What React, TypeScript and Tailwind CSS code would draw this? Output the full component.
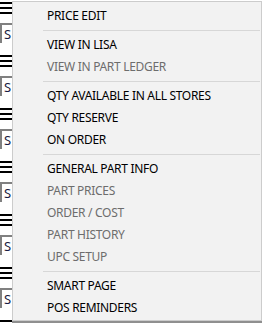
type Entry = { label: string; disabled?: boolean } | "sep";

const entries: Entry[] = [
  { label: "PRICE EDIT" },
  "sep",
  { label: "VIEW IN LISA" },
  { label: "VIEW IN PART LEDGER", disabled: true },
  "sep",
  { label: "QTY AVAILABLE IN ALL STORES" },
  { label: "QTY RESERVE" },
  { label: "ON ORDER" },
  "sep",
  { label: "GENERAL PART INFO" },
  { label: "PART PRICES", disabled: true },
  { label: "ORDER / COST", disabled: true },
  { label: "PART HISTORY", disabled: true },
  { label: "UPC SETUP", disabled: true },
  "sep",
  { label: "SMART PAGE" },
  { label: "POS REMINDERS" },
];

function Grip() {
  return (
    <div className="flex w-[12px] flex-col gap-[3px] pt-[2px]">
      <div className="h-[2px] w-[12px] bg-black" />
      <div className="h-[2px] w-[12px] bg-black" />
      <div className="h-[2px] w-[12px] bg-black" />
    </div>
  );
}

function GripRow() {
  return (
    <div className="h-[53px] shrink-0">
      <Grip />
      <div className="mt-[9px] flex h-[20px] w-[20px] items-center border-l-2 border-t-2 border-[#808080] bg-white pl-[2px] text-[13px] leading-none text-[#1a1a40]">
        S
      </div>
    </div>
  );
}

export default function App() {
  return (
    <div
      className="relative h-[323px] w-[262px] overflow-hidden bg-white"
      style={{ fontFamily: '"Noto Sans", "Open Sans", sans-serif' }}
    >
      <div className="flex flex-col">
        {Array.from({ length: 6 }).map((_, i) => (
          <GripRow key={i} />
        ))}
        <Grip />
      </div>

      <div className="absolute left-[12px] right-0 top-px border border-[#cccccc] bg-[#f2f2f2] pb-px pt-[3px] shadow-[0_2px_0_0_#8f8f8f]">
        {entries.map((e, i) =>
          e === "sep" ? (
            <div key={i} className="flex h-[7px] items-center pl-[30px] pr-px">
              <div className="h-px w-full bg-[#d7d7d7]" />
            </div>
          ) : (
            <div
              key={i}
              className={`flex h-[22px] items-center pl-[34px] text-[12px] leading-none tracking-[-0.3px] ${
                e.disabled ? "text-[#6d6d6d]" : "text-black"
              }`}
            >
              {e.label}
            </div>
          ),
        )}
      </div>
    </div>
  );
}
